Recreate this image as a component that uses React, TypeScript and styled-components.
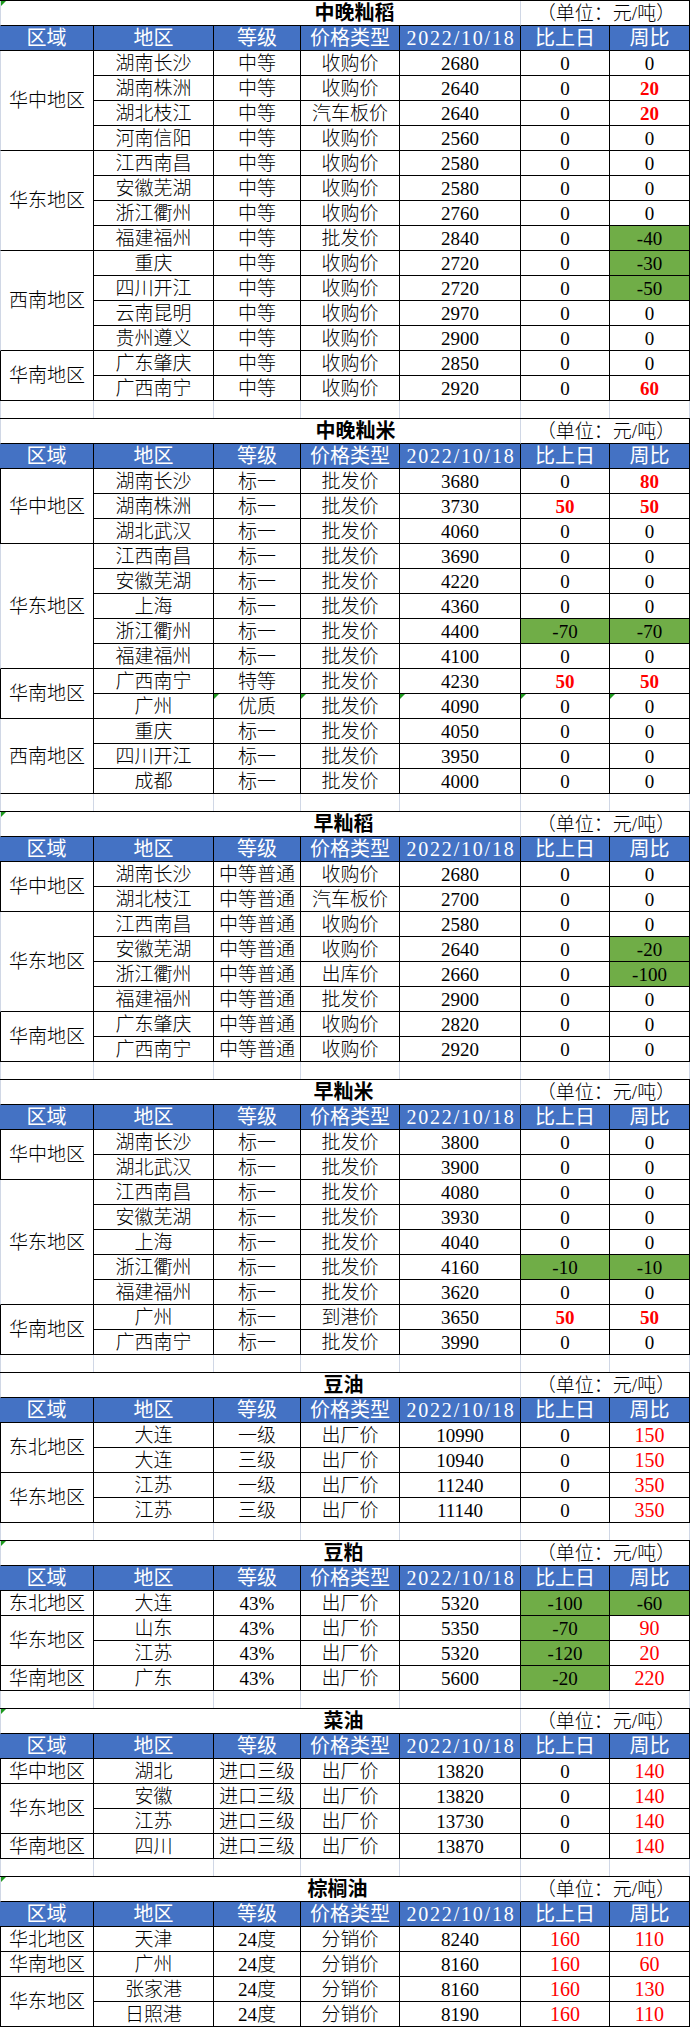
import React from "react";
import styled, { createGlobalStyle, css } from "styled-components";

const GlobalStyle = createGlobalStyle`
  html, body { margin: 0; padding: 0; background: #ffffff; }
  body { width: 690px; }
`;

const COLS = "94px 120px 87px 99px 121px 89px 80px";
const GRID = "#d0d7e5";

const Page = styled.main`
  width: 690px;
  display: flex;
  flex-direction: column;
  font-family: "Liberation Serif", "Noto Sans CJK SC", serif;
  font-size: 19px;
  color: #000;
`;

const Sheet = styled.section`
  display: grid;
  grid-template-columns: ${COLS};
  grid-auto-rows: 25px;
  border-top: 1px solid #000;
`;

const Spacer = styled.div`
  display: grid;
  grid-template-columns: ${COLS};
  height: 17px;
`;

const SpacerCell = styled.div<{ $first?: boolean }>`
  box-sizing: border-box;
  border-right: 1px solid ${GRID};
  ${(p) => p.$first && css`border-left: 1px solid ${GRID};`}
`;

const markCss = css`
  &::before {
    content: "";
    position: absolute;
    top: 0;
    left: 0;
    border-top: 5px solid #1e9a1e;
    border-right: 5px solid transparent;
  }
`;

const BaseCell = styled.div<{ $mark?: boolean }>`
  position: relative;
  box-sizing: border-box;
  border-right: 1px solid #000;
  border-bottom: 1px solid #000;
  display: flex;
  align-items: center;
  justify-content: center;
  white-space: nowrap;
  line-height: 1;
  font-weight: 300;
  ${(p) => p.$mark && markCss}
`;

const TitleCell = styled(BaseCell)<{ $shift: number }>`
  grid-column: 1 / 6;
  border-left: 1px solid ${GRID};
  border-right-color: ${GRID};
  font-size: 20px;
  font-weight: 700;
`;

const TitleText = styled.span<{ $shift: number }>`
  margin-left: ${(p) => 2 * p.$shift}px;
`;

const UnitCell = styled(BaseCell)`
  grid-column: 6 / 8;
  padding-left: 2px;
`;

const HeadCell = styled(BaseCell)<{ $num?: boolean }>`
  background: #4472c4;
  color: #ffffff;
  font-size: 20px;
  font-weight: 400;
  ${(p) =>
    p.$num &&
    css`
      letter-spacing: 1.8px;
      padding-left: 2px;
    `}
`;

const RegionCell = styled(BaseCell)<{ $span: number; $light?: boolean }>`
  grid-column: 1;
  grid-row: span ${(p) => p.$span};
  border-left: 1px solid ${(p) => (p.$light ? GRID : "#000")};
`;

const DataCell = styled(BaseCell)<{ $tone?: "red" | "green"; $bold?: boolean }>`
  ${(p) =>
    p.$tone === "green" &&
    css`
      background: #70ad47;
    `}
  ${(p) =>
    p.$tone === "red" &&
    css`
      color: #ff0000;
      font-weight: ${p.$bold ? 700 : 400};
      font-size: ${p.$bold ? 19 : 20}px;
    `}
`;

type Row = { cells: string[]; mark?: boolean };
type Group = { region: string; light?: boolean; rows: Row[] };
type Table = { title: string; center: number; mark?: boolean; boldRed: boolean; groups: Group[] };

const r = (s: string, mark?: boolean): Row => ({ cells: s.split(" "), mark });

const TABLES: Table[] = [
  {
    title: "中晚籼稻",
    center: 354,
    mark: true,
    boldRed: true,
    groups: [
      {
        region: "华中地区",
        light: true,
        rows: [
          r("湖南长沙 中等 收购价 2680 0 0"),
          r("湖南株洲 中等 收购价 2640 0 r:20"),
          r("湖北枝江 中等 汽车板价 2640 0 r:20"),
          r("河南信阳 中等 收购价 2560 0 0"),
        ],
      },
      {
        region: "华东地区",
        light: true,
        rows: [
          r("江西南昌 中等 收购价 2580 0 0"),
          r("安徽芜湖 中等 收购价 2580 0 0"),
          r("浙江衢州 中等 收购价 2760 0 0"),
          r("福建福州 中等 批发价 2840 0 g:-40"),
        ],
      },
      {
        region: "西南地区",
        light: true,
        rows: [
          r("重庆 中等 收购价 2720 0 g:-30"),
          r("四川开江 中等 收购价 2720 0 g:-50"),
          r("云南昆明 中等 收购价 2970 0 0"),
          r("贵州遵义 中等 收购价 2900 0 0"),
        ],
      },
      {
        region: "华南地区",
        rows: [r("广东肇庆 中等 收购价 2850 0 0"), r("广西南宁 中等 收购价 2920 0 r:60")],
      },
    ],
  },
  {
    title: "中晚籼米",
    center: 355,
    boldRed: true,
    groups: [
      {
        region: "华中地区",
        rows: [
          r("湖南长沙 标一 批发价 3680 0 r:80"),
          r("湖南株洲 标一 批发价 3730 r:50 r:50"),
          r("湖北武汉 标一 批发价 4060 0 0"),
        ],
      },
      {
        region: "华东地区",
        light: true,
        rows: [
          r("江西南昌 标一 批发价 3690 0 0"),
          r("安徽芜湖 标一 批发价 4220 0 0"),
          r("上海 标一 批发价 4360 0 0"),
          r("浙江衢州 标一 批发价 4400 g:-70 g:-70"),
          r("福建福州 标一 批发价 4100 0 0"),
        ],
      },
      {
        region: "华南地区",
        rows: [r("广西南宁 特等 批发价 4230 r:50 r:50"), r("广州 优质 批发价 4090 0 0", true)],
      },
      {
        region: "西南地区",
        light: true,
        rows: [
          r("重庆 标一 批发价 4050 0 0"),
          r("四川开江 标一 批发价 3950 0 0"),
          r("成都 标一 批发价 4000 0 0"),
        ],
      },
    ],
  },
  {
    title: "早籼稻",
    center: 343,
    mark: true,
    boldRed: true,
    groups: [
      {
        region: "华中地区",
        rows: [r("湖南长沙 中等普通 收购价 2680 0 0"), r("湖北枝江 中等普通 汽车板价 2700 0 0")],
      },
      {
        region: "华东地区",
        light: true,
        rows: [
          r("江西南昌 中等普通 收购价 2580 0 0"),
          r("安徽芜湖 中等普通 收购价 2640 0 g:-20"),
          r("浙江衢州 中等普通 出库价 2660 0 g:-100"),
          r("福建福州 中等普通 批发价 2900 0 0"),
        ],
      },
      {
        region: "华南地区",
        rows: [r("广东肇庆 中等普通 收购价 2820 0 0"), r("广西南宁 中等普通 收购价 2920 0 0")],
      },
    ],
  },
  {
    title: "早籼米",
    center: 343,
    boldRed: true,
    groups: [
      {
        region: "华中地区",
        rows: [r("湖南长沙 标一 批发价 3800 0 0"), r("湖北武汉 标一 批发价 3900 0 0")],
      },
      {
        region: "华东地区",
        light: true,
        rows: [
          r("江西南昌 标一 批发价 4080 0 0"),
          r("安徽芜湖 标一 批发价 3930 0 0"),
          r("上海 标一 批发价 4040 0 0"),
          r("浙江衢州 标一 批发价 4160 g:-10 g:-10"),
          r("福建福州 标一 批发价 3620 0 0"),
        ],
      },
      {
        region: "华南地区",
        rows: [r("广州 标一 到港价 3650 r:50 r:50"), r("广西南宁 标一 批发价 3990 0 0")],
      },
    ],
  },
  {
    title: "豆油",
    center: 343,
    boldRed: false,
    groups: [
      {
        region: "东北地区",
        rows: [r("大连 一级 出厂价 10990 0 r:150"), r("大连 三级 出厂价 10940 0 r:150")],
      },
      {
        region: "华东地区",
        rows: [r("江苏 一级 出厂价 11240 0 r:350"), r("江苏 三级 出厂价 11140 0 r:350")],
      },
    ],
  },
  {
    title: "豆粕",
    center: 343,
    mark: true,
    boldRed: false,
    groups: [
      { region: "东北地区", rows: [r("大连 43% 出厂价 5320 g:-100 g:-60")] },
      {
        region: "华东地区",
        rows: [r("山东 43% 出厂价 5350 g:-70 r:90"), r("江苏 43% 出厂价 5320 g:-120 r:20")],
      },
      { region: "华南地区", rows: [r("广东 43% 出厂价 5600 g:-20 r:220")] },
    ],
  },
  {
    title: "菜油",
    center: 343,
    mark: true,
    boldRed: false,
    groups: [
      { region: "华中地区", rows: [r("湖北 进口三级 出厂价 13820 0 r:140")] },
      {
        region: "华东地区",
        rows: [r("安徽 进口三级 出厂价 13820 0 r:140"), r("江苏 进口三级 出厂价 13730 0 r:140")],
      },
      { region: "华南地区", rows: [r("四川 进口三级 出厂价 13870 0 r:140")] },
    ],
  },
  {
    title: "棕榈油",
    center: 337,
    mark: true,
    boldRed: false,
    groups: [
      { region: "华北地区", rows: [r("天津 24度 分销价 8240 r:160 r:110")] },
      { region: "华南地区", rows: [r("广州 24度 分销价 8160 r:160 r:60")] },
      {
        region: "华东地区",
        rows: [r("张家港 24度 分销价 8160 r:160 r:130"), r("日照港 24度 分销价 8190 r:160 r:110")],
      },
    ],
  },
];

const HEADERS = ["区域", "地区", "等级", "价格类型", "2022/10/18", "比上日", "周比"];

function parse(v: string): { text: string; tone?: "red" | "green" } {
  if (v.startsWith("r:")) return { text: v.slice(2), tone: "red" };
  if (v.startsWith("g:")) return { text: v.slice(2), tone: "green" };
  return { text: v };
}

function PriceTable({ t }: { t: Table }) {
  return (
    <Sheet>
      <TitleCell $shift={0} $mark={t.mark}>
        <TitleText $shift={t.center - 260}>{t.title}</TitleText>
      </TitleCell>
      <UnitCell>（单位：元/吨）</UnitCell>
      {HEADERS.map((h, i) => (
        <HeadCell key={h} $num={i === 4}>
          {h}
        </HeadCell>
      ))}
      {t.groups.map((g, gi) => (
        <React.Fragment key={gi}>
          <RegionCell $span={g.rows.length} $light={g.light}>
            {g.region}
          </RegionCell>
          {g.rows.map((row, ri) =>
            row.cells.map((c, ci) => {
              const p = parse(c);
              return (
                <DataCell
                  key={`${ri}-${ci}`}
                  $tone={p.tone}
                  $bold={t.boldRed}
                  $mark={row.mark && ci >= 1}
                >
                  {p.text}
                </DataCell>
              );
            })
          )}
        </React.Fragment>
      ))}
    </Sheet>
  );
}

function Gap() {
  return (
    <Spacer>
      {HEADERS.map((h, i) => (
        <SpacerCell key={h} $first={i === 0} />
      ))}
    </Spacer>
  );
}

export default function App() {
  return (
    <>
      <GlobalStyle />
      <Page>
        {TABLES.map((t, i) => (
          <React.Fragment key={t.title}>
            {i > 0 && <Gap />}
            <PriceTable t={t} />
          </React.Fragment>
        ))}
      </Page>
    </>
  );
}
